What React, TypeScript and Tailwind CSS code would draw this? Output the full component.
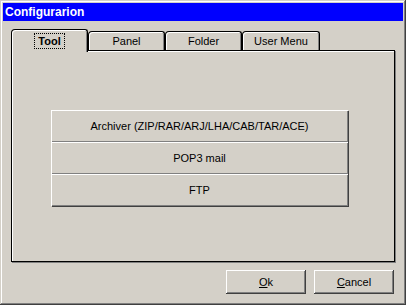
const tabs = [
  { label: 'Tool', w: 'w-[77px]' },
  { label: 'Panel', w: 'w-[77px]' },
  { label: 'Folder', w: 'w-[77px]' },
  { label: 'User Menu', w: 'w-[78px]' },
];

const tools = ['Archiver (ZIP/RAR/ARJ/LHA/CAB/TAR/ACE)', 'POP3 mail', 'FTP'];

export default function App() {
  return (
    <div className="w-[406px] h-[305px] bg-[#d4d0c8] p-[3px] flex flex-col text-[11px] text-black font-['Liberation_Sans',Arial,sans-serif] shadow-[inset_-1px_-1px_#404040,inset_1px_1px_#d4d0c8,inset_-2px_-2px_#808080,inset_2px_2px_#ffffff]">
      {/* Title bar */}
      <div className="h-[18px] bg-[#0000ff] text-white font-bold text-[12px] leading-[18px] pl-[2px] select-none">
        Configurarion
      </div>

      <div className="flex-1 flex flex-col px-[8px] pt-[8px]">
        {/* Tabs */}
        <div className="flex items-end h-[21px] relative z-10">
          {tabs.map((t, i) =>
            i === 0 ? (
              <div
                key={t.label}
                className={`${t.w} h-[23px] -mb-[2px] bg-[#d4d0c8] border border-black border-b-0 rounded-tl-[4px] rounded-tr-[3px] shadow-[inset_1px_1px_#ffffff,inset_-1px_0_#808080] flex items-start justify-center pt-[3px]`}
              >
                <span className="font-bold border border-dotted border-black px-[3px] leading-[14px]">{t.label}</span>
              </div>
            ) : (
              <div
                key={t.label}
                className={`${t.w} h-[19px] bg-[#d4d0c8] border border-black border-b-0 rounded-tl-[4px] rounded-tr-[3px] shadow-[inset_1px_1px_#ffffff,inset_-1px_0_#808080] flex items-center justify-center pt-[1px]`}
              >
                {t.label}
              </div>
            )
          )}
        </div>

        {/* Tab panel */}
        <div className="w-[384px] h-[212px] border border-black shadow-[inset_1px_1px_#ffffff,1px_1px_#808080] flex flex-col items-start pt-[59px] pl-[39px]">
          <div className="w-[297px] flex flex-col shadow-[1px_1px_#404040]">
            {tools.map((t) => (
              <div
                key={t}
                className="h-[32px] flex items-center justify-center shadow-[inset_1px_1px_#ffffff,inset_-1px_-1px_#808080]"
              >
                {t}
              </div>
            ))}
          </div>
        </div>

        {/* Buttons */}
        <div className="flex justify-end gap-[8px] mt-[8px] pr-[1px]">
          <button className="w-[80px] h-[24px] bg-[#d4d0c8] shadow-[inset_-1px_-1px_#404040,inset_1px_1px_#ffffff,inset_-2px_-2px_#808080] flex items-center justify-center">
            <span><span className="underline">O</span>k</span>
          </button>
          <button className="w-[80px] h-[24px] bg-[#d4d0c8] shadow-[inset_-1px_-1px_#404040,inset_1px_1px_#ffffff,inset_-2px_-2px_#808080] flex items-center justify-center">
            <span><span className="underline">C</span>ancel</span>
          </button>
        </div>
      </div>
    </div>
  );
}
